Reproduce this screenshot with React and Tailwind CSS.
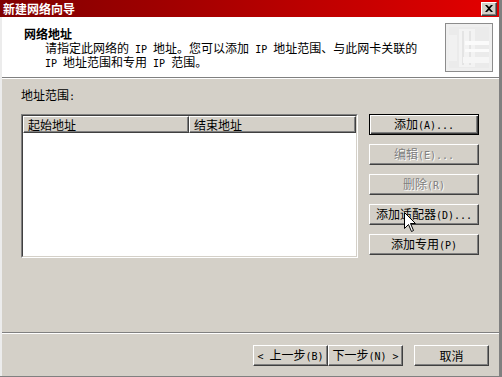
import React from 'react'

// ASCII runs are set in a narrow mono face so they take half a CJK cell, like the bitmap font
const ASCII = /([\x00-\x7f]+)/

function T({ children }) {
  return String(children)
    .split(ASCII)
    .map((part, i) =>
      i % 2 === 1 ? (
        <span key={i} className="font-['DejaVu_Sans_Mono',monospace] text-[10px]">
          {part}
        </span>
      ) : (
        part
      )
    )
}

function Btn({ children, w = 'w-[110px]', disabled = false, primary = false }) {
  const frame = primary
    ? 'border border-black shadow-[inset_1px_1px_0_#ffffff,inset_-1px_-1px_0_#404040,inset_-2px_-2px_0_#808080]'
    : 'border border-t-white border-l-white border-r-[#404040] border-b-[#404040] shadow-[inset_-1px_-1px_0_#808080]'
  const ink = disabled ? 'text-[#808080] [text-shadow:1px_1px_0_#ffffff]' : 'text-black'
  return (
    <div className={`${w} h-[21px] shrink-0 flex items-center justify-center bg-[#d4d0c8] ${frame} ${ink}`}>
      <span className="whitespace-pre">
        <T>{children}</T>
      </span>
    </div>
  )
}

function HeaderCell({ children, className = '' }) {
  return (
    <div
      className={`h-[17px] flex items-center pl-[4px] bg-[#d4d0c8] border border-t-white border-l-white border-r-[#404040] border-b-[#404040] shadow-[inset_-1px_-1px_0_#808080] ${className}`}
    >
      {children}
    </div>
  )
}

function WizardIcon() {
  return (
    <svg width="48" height="49" viewBox="0 0 48 49" className="block">
      <rect x="0.5" y="0.5" width="47" height="48" fill="#efefef" stroke="#8c8c8c" />
      <rect x="4" y="4" width="40" height="41" fill="#ebebeb" />
      <rect x="14" y="6" width="16" height="38" fill="#f3f3f3" />
      <rect x="17" y="8" width="2" height="34" fill="#e4e4e4" />
      <rect x="24" y="8" width="2" height="34" fill="#e4e4e4" />
      <rect x="20" y="18" width="24" height="4" fill="#fbfbfb" />
      <rect x="20" y="26" width="24" height="3" fill="#fbfbfb" />
      <rect x="18" y="34" width="26" height="6" fill="#f6f6f6" />
      <rect x="4" y="12" width="8" height="26" fill="#f1f1f1" />
    </svg>
  )
}

function Cursor() {
  return (
    <svg width="13" height="21" viewBox="0 0 13 21" className="absolute left-[404px] top-[212px]">
      <path
        d="M0.5 0.5 L0.5 16.5 L4.5 12.5 L7.5 19.5 L9.5 18.5 L6.5 11.5 L11.5 11.5 Z"
        fill="#ffffff"
        stroke="#000000"
        strokeWidth="1"
      />
    </svg>
  )
}

export default function App() {
  return (
    <div className="relative w-[502px] h-[377px] overflow-hidden bg-[#d4d0c8] text-black text-[12px] leading-[12px] font-['Noto_Sans_CJK_SC',sans-serif]">
      <div className="flex flex-col h-full border-r-[3px] border-r-[#808080] border-b border-b-[#808080]">
        {/* title bar */}
        <div className="h-[17px] shrink-0 flex items-center justify-between pl-[3px] pr-[2px] bg-linear-to-r from-[#800000] to-[#e40000]">
          <span className="text-white font-bold">新建网络向导</span>
          <div className="w-[16px] h-[14px] flex items-center justify-center bg-[#d4d0c8] border border-t-white border-l-white border-r-[#404040] border-b-[#404040] shadow-[inset_-1px_-1px_0_#808080]">
            <svg width="8" height="7" viewBox="0 0 8 7">
              <path d="M0 0h2l2 2 2-2h2L5 3.5 8 7H6L4 5 2 7H0l3-3.5z" fill="#000" />
            </svg>
          </div>
        </div>

        <div className="flex-1 flex flex-col border-l-2 border-l-[#ececec]">
          {/* header */}
          <div className="h-[60px] shrink-0 flex justify-between bg-white pl-[22px] pr-[6px]">
            <div className="pt-[11px]">
              <div className="font-bold">网络地址</div>
              <div className="mt-[2px] ml-[21px] whitespace-pre">
                <div>
                  <T>请指定此网络的 IP 地址。您可以添加 IP 地址范围、与此网卡关联的</T>
                </div>
                <div>
                  <T>IP 地址范围和专用 IP 范围。</T>
                </div>
              </div>
            </div>
            <div className="pt-[6px]">
              <WizardIcon />
            </div>
          </div>
          <div className="h-px bg-[#808080]" />
          <div className="h-px bg-white" />

          {/* body */}
          <div className="flex-1 pl-[19px] pt-[10px]">
            <div>
              <T>地址范围:</T>
            </div>
            <div className="mt-[11px] flex">
              <div className="w-[337px] h-[144px] border border-t-[#808080] border-l-[#808080] border-r-white border-b-white">
                <div className="h-full bg-white border border-t-[#404040] border-l-[#404040] border-r-[#d4d0c8] border-b-[#d4d0c8]">
                  <div className="flex">
                    <HeaderCell className="w-[166px]">起始地址</HeaderCell>
                    <HeaderCell className="flex-1">结束地址</HeaderCell>
                  </div>
                </div>
              </div>
              <div className="ml-[11px] flex flex-col gap-[9px]">
                <Btn primary>添加(A)...</Btn>
                <Btn disabled>编辑(E)...</Btn>
                <Btn disabled>删除(R)</Btn>
                <Btn>添加适配器(D)...</Btn>
                <Btn>添加专用(P)</Btn>
              </div>
            </div>
          </div>

          <div className="h-px bg-[#808080]" />
          <div className="h-px bg-white" />

          {/* footer */}
          <div className="h-[42px] shrink-0 flex justify-end pt-[11px] pr-[10px]">
            <Btn w="w-[75px]">{'< 上一步(B)'}</Btn>
            <Btn w="w-[75px]">{'下一步(N) >'}</Btn>
            <div className="ml-[11px]">
              <Btn w="w-[75px]">取消</Btn>
            </div>
          </div>
        </div>
      </div>
      <Cursor />
    </div>
  )
}
